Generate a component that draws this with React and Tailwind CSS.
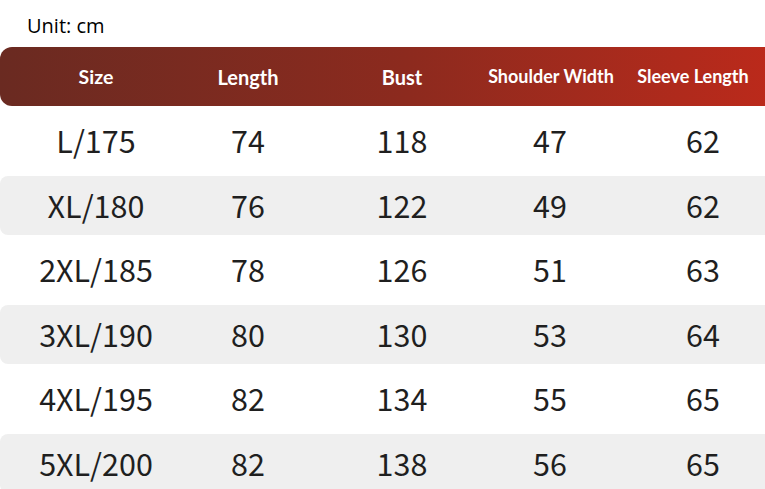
import React from "react";

const rows = [
  ["L/175", "74", "118", "47", "62"],
  ["XL/180", "76", "122", "49", "62"],
  ["2XL/185", "78", "126", "51", "63"],
  ["3XL/190", "80", "130", "53", "64"],
  ["4XL/195", "82", "134", "55", "65"],
  ["5XL/200", "82", "138", "56", "65"],
];

const widths = ["w-[192px]", "w-[112px]", "w-[196px]", "w-[100px]", "w-[206px]"];

export default function App() {
  return (
    <div className="w-[765px] h-[489px] overflow-hidden bg-white relative">
      <div className="h-[47px] pl-[27px] pt-[13px] text-[20px] leading-[26px] text-black font-['Open_Sans',sans-serif]">
        Unit: cm
      </div>
      <div className="flex flex-col gap-[5.5px] w-[806px]">
        <div className="flex items-center h-[59px] rounded-l-[12px] bg-gradient-to-r from-[#6a2a21] via-[#8c2a1e] to-[#c0291a] text-white font-bold font-['Lato',sans-serif]">
          <div className="w-[192px] flex justify-center text-[19.5px]">Size</div>
          <div className="w-[112px] flex justify-center text-[20px]">Length</div>
          <div className="w-[196px] flex justify-center text-[20px]">Bust</div>
          <div className="w-[102px] flex justify-center text-[18px] whitespace-nowrap">Shoulder Width</div>
          <div className="w-[182px] flex justify-center text-[18px] whitespace-nowrap">Sleeve Length</div>
        </div>
        {rows.map((r, i) => (
          <div
            key={r[0]}
            className={`flex items-center h-[59px] rounded-l-[8px] text-[#1f1f1f] text-[30.5px] font-['Noto_Sans_CJK_SC',sans-serif] ${
              i % 2 === 1 ? "bg-[#efefef]" : "bg-white"
            }`}
          >
            {r.map((c, j) => (
              <div key={j} className={`${widths[j]} flex justify-center`}>
                {c}
              </div>
            ))}
          </div>
        ))}
      </div>
    </div>
  );
}
